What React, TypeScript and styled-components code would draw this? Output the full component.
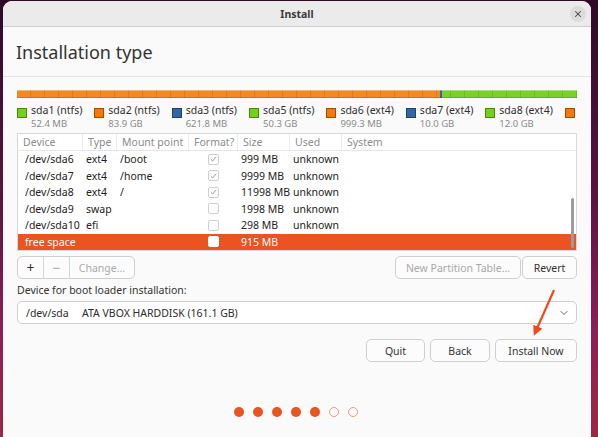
import styled, { createGlobalStyle } from 'styled-components';
import { X, ChevronDown } from 'lucide-react';

const GlobalStyle = createGlobalStyle`
    html, body {
        margin: 0;
        height: 100%;
        overflow: hidden;
    }
    body {
        background: linear-gradient(to bottom, #2e0a25 0%, #5a1440 45%, #8c1f55 75%, #9c2844 100%);
        font-family: "Noto Sans", "DejaVu Sans", sans-serif;
        color: #333;
    }
`;

const Window = styled.div`
    position: relative;
    margin: 1px 0 0 3px;
    width: 588px;
    height: 440px;
    background: #fafafa;
    border-radius: 9px 9px 0 0;
    overflow: hidden;
`;

const TitleBar = styled.div`
    height: 25px;
    display: grid;
    grid-template-columns: 1fr auto 1fr;
    align-items: center;
    background: #ebebeb;
    border-bottom: 1px solid #cfcfcf;
    font-size: 10.5px;
    font-weight: bold;
    color: #3a3a3a;
`;

const CloseButton = styled.div`
    grid-column: 3;
    justify-self: end;
    margin-right: 5px;
    width: 16px;
    height: 16px;
    border-radius: 50%;
    background: #dcdcdc;
    display: flex;
    align-items: center;
    justify-content: center;
    color: #444;
`;

const Header = styled.div`
    height: 49px;
    display: flex;
    align-items: center;
    padding-left: 13px;
    border-bottom: 1px solid #e4e4e4;
    font-size: 18px;
    color: #333;
`;

const Content = styled.div`
    padding: 13px 14px 0 14px;
`;

const PartitionBar = styled.div`
    height: 8px;
    display: flex;
    position: relative;
    &::after {
        content: '';
        position: absolute;
        inset: 0;
        background: repeating-linear-gradient(to right, transparent 0 13px, rgba(0, 0, 0, 0.1) 13px 14px);
        box-shadow: inset 0 1px rgba(255, 255, 255, 0.35), inset 0 -1px rgba(0, 0, 0, 0.15);
    }
`;

const Segment = styled.div<{ $color: string }>`
    background: ${p => p.$color};
`;

const Legend = styled.div`
    margin-top: 6px;
    height: 27px;
    display: flex;
    gap: 12px;
    overflow: hidden;
    white-space: nowrap;
`;

const LegendItem = styled.div`
    display: flex;
    gap: 4px;
    flex-shrink: 0;
`;

const Swatch = styled.div<{ $color: string }>`
    width: 8px;
    height: 8px;
    margin-top: 4px;
    background: ${p => p.$color};
    border: 1px solid rgba(0, 0, 0, 0.35);
`;

const LegendText = styled.div`
    display: flex;
    flex-direction: column;
    font-size: 10.5px;
    line-height: 13px;
    color: #2e2e2e;
`;

const LegendSize = styled.span`
    font-size: 9.5px;
    color: #8a8a8a;
`;

const Table = styled.div`
    position: relative;
    margin-top: 2px;
    height: 116px;
    border: 1px solid #d8d8d8;
    background: #fff;
    overflow: hidden;
`;

const COLUMNS = '65px 34px 72px 49px 52px 52px 1fr';

const HeadRow = styled.div`
    display: grid;
    grid-template-columns: ${COLUMNS};
    height: 16px;
    border-bottom: 1px solid #e6e6e6;
    font-size: 10.5px;
    color: #8c8c8c;
`;

const HeadCell = styled.div`
    padding-left: 5px;
    line-height: 16px;
    border-right: 1px solid #ececec;
    white-space: nowrap;
    overflow: hidden;
    &:last-child {
        border-right: none;
    }
`;

const Row = styled.div<{ $selected?: boolean }>`
    display: grid;
    grid-template-columns: ${COLUMNS};
    height: 16.5px;
    align-items: center;
    font-size: 10.5px;
    background: ${p => (p.$selected ? '#e95420' : 'transparent')};
    color: ${p => (p.$selected ? '#fff' : '#222')};
`;

const Cell = styled.div<{ $first?: boolean }>`
    padding-left: ${p => (p.$first ? '7px' : '3px')};
    white-space: nowrap;
`;

const CheckCell = styled.div`
    display: flex;
    justify-content: center;
`;

const CheckBox = styled.div<{ $filled?: boolean }>`
    width: 9px;
    height: 9px;
    border: 1px solid ${p => (p.$filled ? '#fff' : '#cfcfcf')};
    border-radius: 2px;
    background: #fff;
    display: flex;
    align-items: center;
    justify-content: center;
`;

const Scrollbar = styled.div`
    position: absolute;
    right: 2px;
    top: 64px;
    width: 3px;
    height: 50px;
    border-radius: 2px;
    background: #9c9c9c;
`;

const ButtonRow = styled.div`
    margin-top: 5px;
    display: flex;
    justify-content: space-between;
`;

const ButtonGroup = styled.div`
    display: flex;
    height: 21px;
    border: 1px solid #cfcfcf;
    border-radius: 5px;
    background: #fcfcfc;
`;

const GroupButton = styled.div<{ $width: number; $disabled?: boolean; $symbol?: boolean }>`
    width: ${p => p.$width}px;
    display: flex;
    align-items: center;
    justify-content: center;
    font-size: ${p => (p.$symbol ? '14px' : '10.5px')};
    color: ${p => (p.$disabled ? '#aaa' : '#333')};
    border-right: 1px solid #d6d6d6;
    &:last-child {
        border-right: none;
    }
`;

const Buttons = styled.div`
    display: flex;
    gap: 1px;
`;

const Button = styled.div<{ $width: number; $disabled?: boolean }>`
    width: ${p => p.$width}px;
    height: 21px;
    box-sizing: content-box;
    border: 1px solid #cfcfcf;
    border-radius: 5px;
    background: #fcfcfc;
    display: flex;
    align-items: center;
    justify-content: center;
    font-size: 10.5px;
    color: ${p => (p.$disabled ? '#a8a8a8' : '#333')};
    white-space: nowrap;
`;

const Label = styled.div`
    margin-top: 4px;
    font-size: 10.5px;
    line-height: 14px;
    color: #333;
`;

const Combo = styled.div`
    margin-top: 4px;
    height: 21px;
    border: 1px solid #cfcfcf;
    border-radius: 5px;
    background: #fff;
    display: flex;
    align-items: center;
    padding: 0 6px 0 8px;
    font-size: 10.5px;
    color: #2c2c2c;
`;

const ComboDevice = styled.span`
    flex: 0 0 56px;
`;

const ComboName = styled.span`
    flex: 1;
`;

const ActionRow = styled.div`
    margin-top: 15px;
    display: flex;
    justify-content: flex-end;
    gap: 5px;
`;

const Dots = styled.div`
    margin-top: 45px;
    display: flex;
    justify-content: center;
    gap: 9px;
    padding-right: 2px;
`;

const Dot = styled.div<{ $done?: boolean }>`
    width: 10px;
    height: 10px;
    box-sizing: border-box;
    border-radius: 50%;
    background: ${p => (p.$done ? '#e95420' : 'transparent')};
    border: ${p => (p.$done ? 'none' : '1.5px solid #f0997a')};
`;

const Arrow = styled.svg`
    position: absolute;
    left: 0;
    top: 0;
    pointer-events: none;
`;

const legend = [
    { name: 'sda1 (ntfs)', size: '52.4 MB', color: '#73d216' },
    { name: 'sda2 (ntfs)', size: '83.9 GB', color: '#f57900' },
    { name: 'sda3 (ntfs)', size: '621.8 MB', color: '#3465a4' },
    { name: 'sda5 (ntfs)', size: '50.3 GB', color: '#73d216' },
    { name: 'sda6 (ext4)', size: '999.3 MB', color: '#f57900' },
    { name: 'sda7 (ext4)', size: '10.0 GB', color: '#3465a4' },
    { name: 'sda8 (ext4)', size: '12.0 GB', color: '#73d216' },
];

const rows = [
    { device: '/dev/sda6', type: 'ext4', mount: '/boot', format: true, size: '999 MB', used: 'unknown' },
    { device: '/dev/sda7', type: 'ext4', mount: '/home', format: true, size: '9999 MB', used: 'unknown' },
    { device: '/dev/sda8', type: 'ext4', mount: '/', format: true, size: '11998 MB', used: 'unknown' },
    { device: '/dev/sda9', type: 'swap', mount: '', format: false, size: '1998 MB', used: 'unknown' },
    { device: '/dev/sda10', type: 'efi', mount: '', format: false, size: '298 MB', used: 'unknown' },
];

const Tick = () => (
    <svg width="7" height="6" viewBox="0 0 7 6">
        <path d="M0.8 3.2 L2.7 5 L6.2 0.8" fill="none" stroke="#9a9a9a" strokeWidth="1" />
    </svg>
);

export default function App() {
    return (
        <>
            <GlobalStyle />
            <Window>
                <TitleBar>
                    <span style={{ gridColumn: 2 }}>Install</span>
                    <CloseButton>
                        <X size={10} strokeWidth={2.5} />
                    </CloseButton>
                </TitleBar>
                <Header>Installation type</Header>
                <Content>
                    <PartitionBar>
                        <Segment $color="#ef8a24" style={{ width: '75.5%' }} />
                        <Segment $color="#3465a4" style={{ width: '2px' }} />
                        <Segment $color="#7ccf2c" style={{ flex: 1 }} />
                    </PartitionBar>
                    <Legend>
                        {legend.map(item => (
                            <LegendItem key={item.name}>
                                <Swatch $color={item.color} />
                                <LegendText>
                                    {item.name}
                                    <LegendSize>{item.size}</LegendSize>
                                </LegendText>
                            </LegendItem>
                        ))}
                        <LegendItem>
                            <Swatch $color="#f57900" />
                        </LegendItem>
                    </Legend>
                    <Table>
                        <HeadRow>
                            <HeadCell>Device</HeadCell>
                            <HeadCell>Type</HeadCell>
                            <HeadCell>Mount point</HeadCell>
                            <HeadCell>Format?</HeadCell>
                            <HeadCell>Size</HeadCell>
                            <HeadCell>Used</HeadCell>
                            <HeadCell>System</HeadCell>
                        </HeadRow>
                        {rows.map(r => (
                            <Row key={r.device}>
                                <Cell $first>{r.device}</Cell>
                                <Cell>{r.type}</Cell>
                                <Cell>{r.mount}</Cell>
                                <CheckCell>
                                    <CheckBox>{r.format && <Tick />}</CheckBox>
                                </CheckCell>
                                <Cell>{r.size}</Cell>
                                <Cell>{r.used}</Cell>
                                <Cell />
                            </Row>
                        ))}
                        <Row $selected>
                            <Cell $first>free space</Cell>
                            <Cell />
                            <Cell />
                            <CheckCell>
                                <CheckBox $filled />
                            </CheckCell>
                            <Cell>915 MB</Cell>
                            <Cell />
                            <Cell />
                        </Row>
                        <Scrollbar />
                    </Table>
                    <ButtonRow>
                        <ButtonGroup>
                            <GroupButton $width={25} $symbol>+</GroupButton>
                            <GroupButton $width={25} $symbol $disabled>−</GroupButton>
                            <GroupButton $width={64} $disabled>Change...</GroupButton>
                        </ButtonGroup>
                        <Buttons>
                            <Button $width={124} $disabled>New Partition Table...</Button>
                            <Button $width={53}>Revert</Button>
                        </Buttons>
                    </ButtonRow>
                    <Label>Device for boot loader installation:</Label>
                    <Combo>
                        <ComboDevice>/dev/sda</ComboDevice>
                        <ComboName>ATA VBOX HARDDISK (161.1 GB)</ComboName>
                        <ChevronDown size={12} color="#666" />
                    </Combo>
                    <ActionRow>
                        <Button $width={57}>Quit</Button>
                        <Button $width={58}>Back</Button>
                        <Button $width={80}>Install Now</Button>
                    </ActionRow>
                    <Dots>
                        {[0, 1, 2, 3, 4, 5, 6].map(i => (
                            <Dot key={i} $done={i < 5} />
                        ))}
                    </Dots>
                </Content>
                <Arrow width="588" height="440">
                    <defs>
                        <marker id="head" markerWidth="10" markerHeight="10" refX="7" refY="5" orient="auto" markerUnits="userSpaceOnUse">
                            <path d="M0 0 L10 5 L0 10 Z" fill="#f24a18" />
                        </marker>
                    </defs>
                    <line x1="551" y1="289" x2="532" y2="332" stroke="#f24a18" strokeWidth="2.2" markerEnd="url(#head)" />
                </Arrow>
            </Window>
        </>
    );
}
